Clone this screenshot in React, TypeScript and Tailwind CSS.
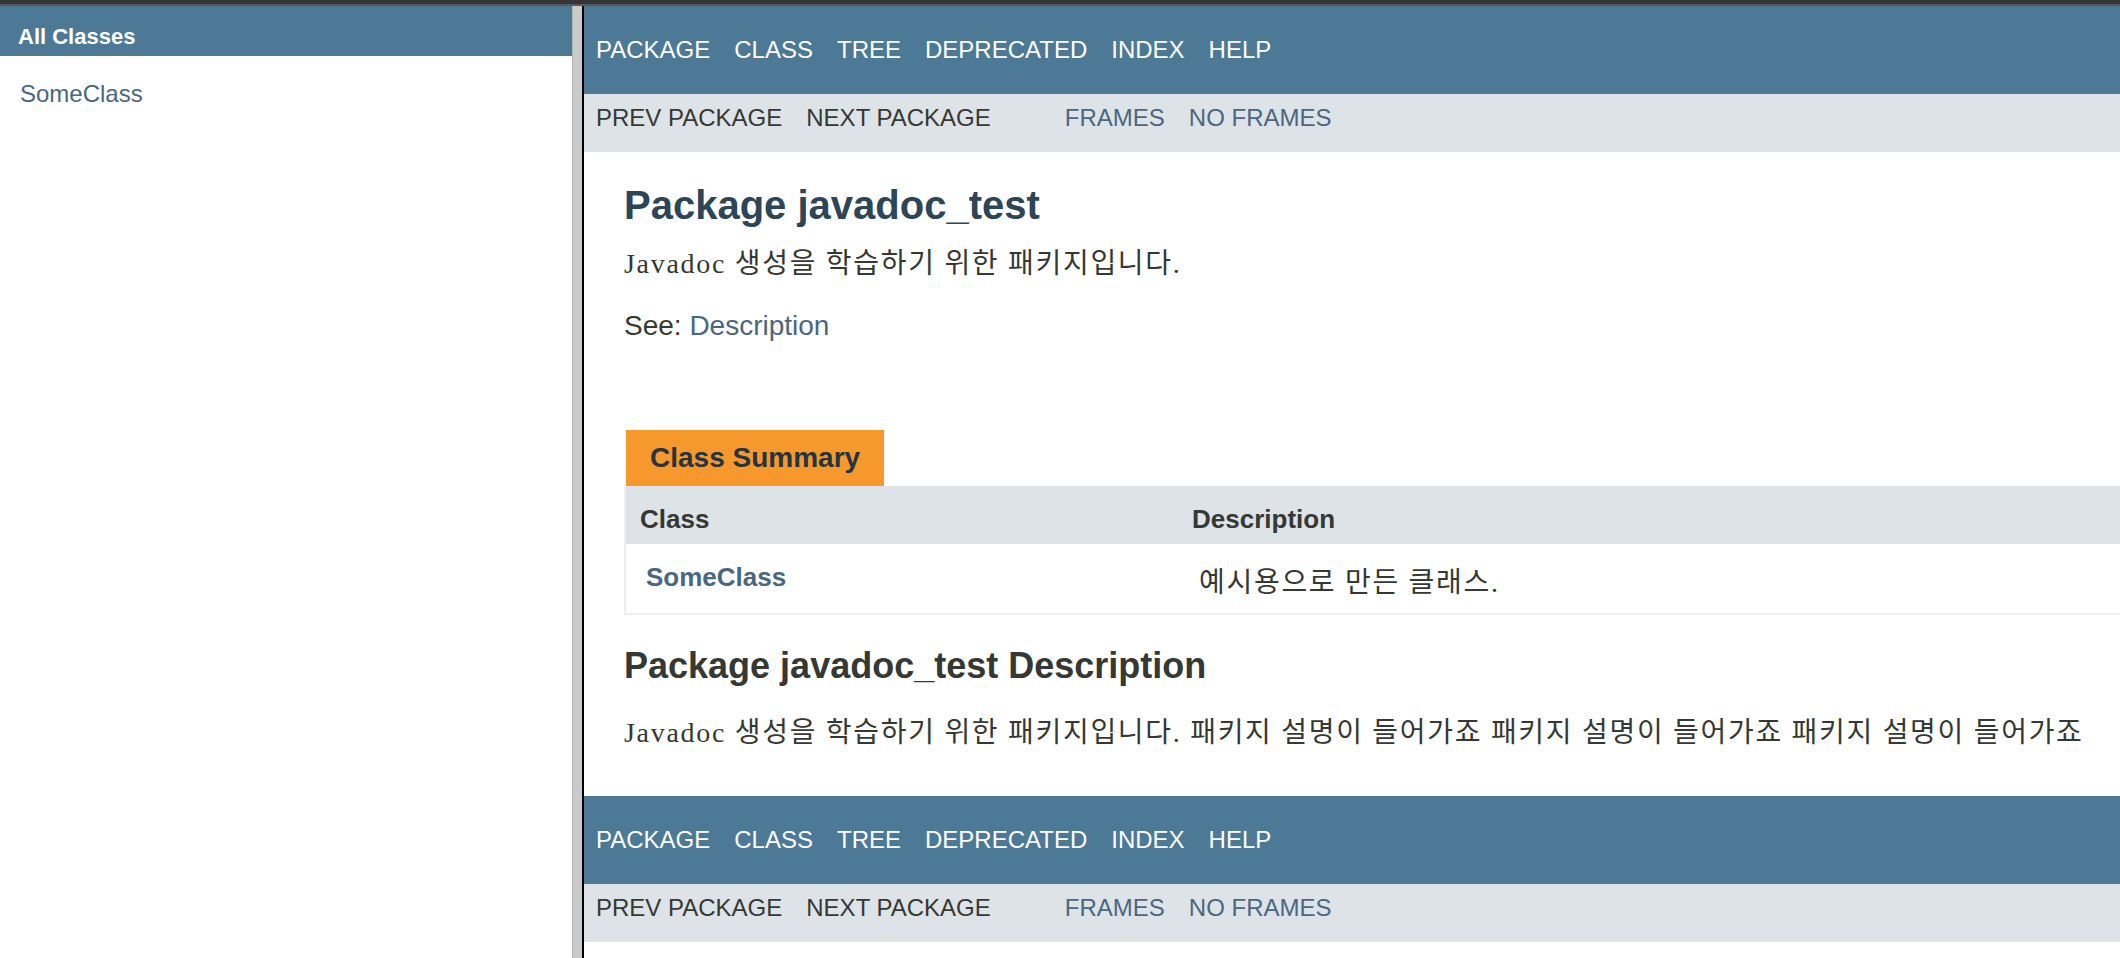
import React from "react";

const sans = "font-['Liberation_Sans','Noto_Sans_CJK_KR',sans-serif]";
const serif = "font-['Liberation_Serif','Noto_Sans_CJK_KR',serif] tracking-[1.7px]";

function TopNav() {
  const items = ["Package", "Class", "Tree", "Deprecated", "Index", "Help"];
  return (
    <div className="h-[88px] shrink-0 bg-[#4c7996] pt-[20px]">
      <ul className="flex">
        {items.map((t) => (
          <li key={t} className="px-[12px] py-[10px] text-[24px] leading-[28px] uppercase text-white">
            {t}
          </li>
        ))}
      </ul>
    </div>
  );
}

function SubNav() {
  return (
    <div className="flex h-[58px] shrink-0 bg-[#dee3e8]">
      <ul className="mr-[50px] flex">
        <li className="px-[12px] py-[10px] text-[24px] leading-[28px] text-[#353833]">PREV PACKAGE</li>
        <li className="px-[12px] py-[10px] text-[24px] leading-[28px] text-[#353833]">NEXT PACKAGE</li>
      </ul>
      <ul className="flex">
        <li className="px-[12px] py-[10px] text-[24px] leading-[28px] text-[#4a6782]">FRAMES</li>
        <li className="px-[12px] py-[10px] text-[24px] leading-[28px] text-[#4a6782]">NO FRAMES</li>
      </ul>
    </div>
  );
}

export default function App() {
  return (
    <div className={`flex h-[958px] w-[2120px] flex-col overflow-hidden bg-white ${sans} text-[#353833]`}>
      <div className="h-[4px] shrink-0 bg-[#353538]" />
      <div className="h-[2px] shrink-0 bg-[#57585b]" />
      <div className="flex min-h-0 flex-1">
        {/* left frame */}
        <div className="w-[572px] shrink-0 bg-white">
          <h1 className="h-[50px] bg-[#4c7996] pl-[18px] pt-[18px] text-[22px] font-bold leading-[25px] text-white">
            All Classes
          </h1>
          <div className="m-[20px]">
            <ul>
              <li className="pt-[4px] text-[24px] leading-[28px] text-[#4a6782]">SomeClass</li>
            </ul>
          </div>
        </div>
        {/* frame divider */}
        <div className="w-[10px] shrink-0 border-l border-[#b5b5b5] bg-[#cacaca]" />
        <div className="w-[2px] shrink-0 bg-black" />
        {/* right frame */}
        <div className="flex min-w-0 flex-1 flex-col overflow-hidden">
          <TopNav />
          <SubNav />
          <div className="pl-[40px] pt-[10px]">
            <h1 className="my-[20px] text-[40px] font-bold leading-[46px] text-[#2c4557]">Package javadoc_test</h1>
            <div className={`${serif} text-[28px] leading-[32px] text-[#353833]`}>
              Javadoc 생성을 학습하기 위한 패키지입니다.
            </div>
            <p className="mt-[30px] text-[28px] leading-[32px]">
              See:&nbsp;<span className="text-[#4a6782]">Description</span>
            </p>

            <div className="mt-[88px]">
              <div className="flex pl-[2px]">
                <div className="h-[56px] bg-[#f7982c] px-[24px] pt-[12px] text-[28px] font-bold leading-[32px] whitespace-nowrap text-[#253441]">
                  Class Summary
                </div>
              </div>
              <table className="w-full border-collapse border-b-2 border-l-2 border-[#eeeeee]">
                <colgroup>
                  <col className="w-[552px]" />
                  <col />
                </colgroup>
                <thead>
                  <tr className="bg-[#dee3e8]">
                    <th className="h-[58px] pl-[14px] pt-[18px] pb-[10px] text-left align-top text-[26px] font-bold leading-[30px] text-[#353833]">
                      Class
                    </th>
                    <th className="h-[58px] pl-[15px] pt-[18px] pb-[10px] text-left align-top text-[26px] font-bold leading-[30px] text-[#353833]">
                      Description
                    </th>
                  </tr>
                </thead>
                <tbody>
                  <tr className="bg-white">
                    <td className="h-[70px] pl-[20px] pt-[18px] align-top text-[26px] font-bold leading-[30px] whitespace-nowrap text-[#4a6782]">
                      SomeClass
                    </td>
                    <td className="h-[70px] pl-[22px] pt-[23px] align-top">
                      <div className={`${serif} text-[28px] leading-[32px] text-[#353833]`}>예시용으로 만든 클래스.</div>
                    </td>
                  </tr>
                </tbody>
              </table>
            </div>

            <h2 className="mt-[30px] text-[36px] font-bold leading-[41px] text-[#353833]">
              Package javadoc_test Description
            </h2>
            <div className={`${serif} mt-[31px] text-[28px] leading-[32px] whitespace-nowrap text-[#353833]`}>
              Javadoc 생성을 학습하기 위한 패키지입니다. 패키지 설명이 들어가죠 패키지 설명이 들어가죠 패키지 설명이 들어가죠
            </div>
          </div>
          <div className="mt-[47px]">
            <TopNav />
            <SubNav />
          </div>
        </div>
      </div>
    </div>
  );
}
